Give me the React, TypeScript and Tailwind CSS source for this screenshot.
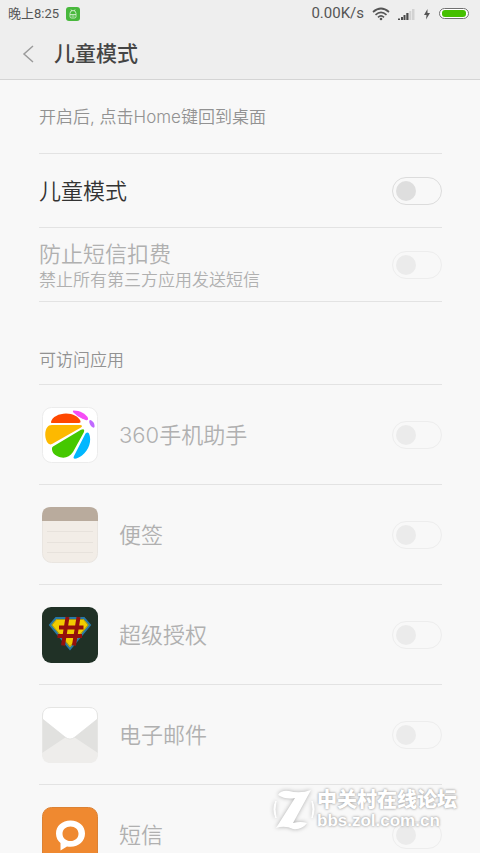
import type { ReactNode } from "react";
import { useState } from "react";

type Aplicacion = {
  id: string;
  nombre: string;
  icono: ReactNode;
};

const IconoAsistente = () => (
  <svg viewBox="0 0 56 56" className="size-14" aria-hidden="true">
    <rect x=".5" y=".5" width="55" height="55" rx="9" fill="#fff" stroke="#ececec" />
    <path d="M9 15C10 10 17 6.500 24 6.500C31 6.500 37 10 38.500 14Q39 16 37 16H10Q8.500 16 9 15Z" fill="#ff4800" />
    <path d="M31.500 3.500C38 3.500 44 7 46 11Q46.500 14 43.500 13C39 11.500 33 7.500 31 5Q30.500 3.800 31.500 3.500Z" fill="#f54df5" />
    <path d="M48 13C51 13.500 53 17 52.500 20Q51.500 21.500 49.500 19.500C47.500 17.500 46.500 13.500 48 13Z" fill="#c069ff" />
    <path d="M10 18H38Q41.500 18.500 39 20.500L10 37Q7 38.500 5 35C2 29 3 21 7 18.600Q8 18 10 18Z" fill="#fdb900" />
    <path d="M11 39.500L39 22.800Q43 21 42 25L31 45C27 51 21 52 15 49C12 47.500 10 45 10 42.500Q9.500 40.500 11 39.500Z" fill="#45c800" />
    <path d="M43.500 26.500Q45.500 24.500 47 26.500C50 34 47 43 40 48.500C37 51 33.500 52 32 51.500Q31 51 32 49Z" fill="#00b7ff" />
  </svg>
);

const IconoNotas = () => (
  <svg viewBox="0 0 56 56" className="size-14" aria-hidden="true">
    <rect x=".5" y=".5" width="55" height="55" rx="9" fill="#f2ede7" stroke="#e9e5e0" />
    <path d="M0 14V9Q0 0 9 0H47Q56 0 56 9V14Z" fill="#b9ab9d" />
    <path d="M5 24.500H51M5 35.500H51M5 45.500H51" stroke="#e7e2dc" />
  </svg>
);

const IconoPermisos = () => (
  <svg viewBox="0 0 56 56" className="size-14" aria-hidden="true">
    <rect width="56" height="56" rx="9" fill="#203126" />
    <path d="M14 11H42L48 18L28 42L8 18Z" fill="#f2cc00" stroke="#2877a5" strokeWidth="2" />
    <path d="M14.500 12.500H41.500L46 18L28 39.500L10 18Z" fill="none" stroke="#a99a13" />
    <path d="M25.500 10L21 38.500M36.500 10L32 38.500M17 20.500H41.500M15.500 29H40" fill="none" stroke="#94100c" strokeWidth="4" />
  </svg>
);

const IconoCorreo = () => (
  <svg viewBox="0 0 56 56" className="size-14" aria-hidden="true">
    <rect x=".5" y=".5" width="55" height="55" rx="9" fill="#e1e1df" stroke="#e6e6e4" />
    <path d="M0 46L24 30H32L56 46V47Q56 56 47 56H9Q0 56 0 47Z" fill="#eeedeb" />
    <path d="M.500 12V9Q.500 .500 9 .500H47Q55.500 .500 55.500 9V12L33 30Q28 34 23 30Z" fill="#fff" stroke="#dededc" strokeWidth=".7" />
  </svg>
);

const IconoMensajes = () => (
  <svg viewBox="0 0 56 56" className="size-14" aria-hidden="true">
    <rect x=".5" y=".5" width="55" height="55" rx="9" fill="#ef8930" stroke="#dc8234" />
    <path
      d="M28.500 13.500C20 13.500 14 19 14 26.500C14 31 16 34 18.500 36V43.500L25 39.500C35 41.500 43 35 43 26.500C43 19 37 13.500 28.500 13.500ZM28.500 19.500C33 19.500 36.500 22.500 36.500 26.700C36.500 31 33 34 28.500 34C24 34 20.500 31 20.500 26.700C20.500 22.500 24 19.500 28.500 19.500Z"
      fill="#fff"
      fillRule="evenodd"
    />
  </svg>
);

const aplicaciones: Aplicacion[] = [
  { id: "asistente", nombre: "360手机助手", icono: <IconoAsistente /> },
  { id: "notas", nombre: "便签", icono: <IconoNotas /> },
  { id: "permisos", nombre: "超级授权", icono: <IconoPermisos /> },
  { id: "correo", nombre: "电子邮件", icono: <IconoCorreo /> },
  { id: "mensajes", nombre: "短信", icono: <IconoMensajes /> },
];

type InterruptorProps = {
  id: string;
  disabled?: boolean;
  checked?: boolean;
  onChange?: (valor: boolean) => void;
};

const Interruptor = ({ id, disabled, checked = false, onChange }: InterruptorProps) => (
  <input
    id={id}
    type="checkbox"
    role="switch"
    disabled={disabled}
    checked={checked}
    onChange={(e) => onChange?.(e.target.checked)}
    className="flex h-7 w-[50px] shrink-0 appearance-none items-center rounded-full border border-[#dcdcdc] px-[3px] before:size-5 before:rounded-full before:bg-[#dedede] checked:justify-end checked:before:bg-[#45c800] disabled:border-[#ededed] disabled:before:bg-[#ebebeb]"
  />
);

const BarraEstado = () => (
  <div className="flex h-7 items-center justify-between pr-[11px] pb-px pl-2 text-[#555]">
    <div className="flex items-center gap-[7px] font-['Roboto','Noto_Sans_CJK_SC',sans-serif] text-[13px]">
      <span>晚上8:25</span>
      <svg viewBox="0 0 14 14" className="size-[14px]" aria-hidden="true">
        <rect width="14" height="14" rx="3" fill="#48b83c" />
        <path d="M4 6.500Q4 3.500 7 3.500T10 6.500V9.500Q10 11 8.500 11H5.500Q4 11 4 9.500ZM4 7.500H10M5 2.500L6 4M9 2.500L8 4M5.500 9H8.500" fill="none" stroke="#dff4dc" strokeWidth=".8" />
      </svg>
    </div>
    <div className="flex items-center">
      <span className="font-['Roboto','Noto_Sans_CJK_SC',sans-serif] text-[15px]">0.00K/s</span>
      <svg viewBox="0 0 18 14" className="ml-2 h-[14px] w-[18px]" fill="none" stroke="#555" strokeWidth="1.700" aria-hidden="true">
        <path d="M1 5Q9-2 17 5M3.500 7.800Q9 3 14.500 7.800M6 10.300Q9 7.500 12 10.300" />
        <circle cx="9" cy="12" r="1.300" fill="#555" stroke="none" />
      </svg>
      <svg viewBox="0 0 18 12" className="ml-[7px] h-3 w-[18px]" aria-hidden="true">
        <path d="M1 10.500H3V12H1ZM4 9H6V12H4ZM6.500 7H8.500V12H6.500ZM9.300 5H11.500V12H9.300Z" fill="#4a4a4a" />
        <path d="M12.300 3H14.300V12H12.300ZM15 1H17.500V12H15Z" fill="#d2d2d2" />
      </svg>
      <svg viewBox="0 0 8 12" className="ml-2 h-3 w-2" aria-hidden="true">
        <path d="M4.500 1L1 7H3.500L3 11.500L7 5H4.500Z" fill="#555" />
      </svg>
      <svg viewBox="0 0 30 11" className="ml-2 h-[11px] w-[30px]" aria-hidden="true">
        <rect x=".5" y=".5" width="29" height="10" rx="5" fill="#fff" stroke="#707070" />
        <rect x="3" y="2" width="24" height="7" rx="3" fill="#45c000" />
      </svg>
    </div>
  </div>
);

const MarcaForo = () => (
  <div className="pointer-events-none absolute right-[23px] bottom-[22px] flex items-center gap-[2px] text-white">
    <svg viewBox="0 0 42 42" className="size-[42px] drop-shadow-[0_0_2px_#aaaaaa]" aria-hidden="true">
      <path d="M5 6Q8 1 16 2Q27 5 38 1L20 34Q28 32 34 34Q29 41 20 40Q12 36 3 39L22 9Q13 11 5 6Z" fill="#fff" />
      <path d="M3 12Q-1 20 3 29Q1 20 3 12ZM39 12Q43 20 39 29Q41 20 39 12Z" fill="#fff" stroke="#fff" />
    </svg>
    <div className="font-['Liberation_Sans','Noto_Sans_CJK_SC',sans-serif] [text-shadow:0_0_2px_#aaa,0_0_3px_#aaa]">
      <p className="text-[20px] leading-[22px] font-black">中关村在线论坛</p>
      <p className="text-[17px] leading-[20px] font-bold">bbs.zol.com.cn</p>
    </div>
  </div>
);

const App = () => {
  const [modoInfantil, setModoInfantil] = useState(false);
  return (
    <div className="relative flex h-screen flex-col overflow-hidden bg-[#f8f8f8] font-['Inter','Noto_Sans_CJK_SC',sans-serif]">
      <header className="shrink-0 border-b border-[#d4d4d4] bg-[#eee]">
        <BarraEstado />
        <div className="flex h-[51px] items-center gap-[18px] pl-[22px]">
          <button type="button" aria-label="返回">
            <svg viewBox="0 0 14 20" className="h-5 w-[14px]" fill="none" stroke="#9b9b9b" strokeWidth="1.500" aria-hidden="true">
              <path d="M11 2L2 10L11 18" />
            </svg>
          </button>
          <h1 className="text-[21px] font-medium text-[#444]">儿童模式</h1>
        </div>
      </header>

      <main className="min-h-0 flex-1 overflow-y-auto pr-[38px] pl-[39px] [scrollbar-width:none]">
        <p className="flex h-[73px] items-center pt-[2px] text-[17px] font-[350] text-[#929292]">开启后, 点击Home键回到桌面</p>
        <div className="flex h-[74px] items-center justify-between border-t border-[#e3e3e3]">
          <label htmlFor="modo" className="pt-[2px] text-[22px] font-[350] text-[#333]">儿童模式</label>
          <Interruptor id="modo" checked={modoInfantil} onChange={setModoInfantil} />
        </div>
        <div className="flex h-[75px] items-center justify-between border-y border-[#e3e3e3]">
          <label htmlFor="sms" className="pt-[2px] font-[350] text-[#b0b0b0]">
            <span className="block text-[22px] leading-7">防止短信扣费</span>
            <span className="block text-[17px] leading-6">禁止所有第三方应用发送短信</span>
          </label>
          <Interruptor id="sms" disabled />
        </div>

        {/* Aplicaciones permitidas */}
        <h2 className="pt-[46px] pb-[11px] text-[17px] leading-[25px] font-[350] text-[#929292]">可访问应用</h2>
        <ul>
          {aplicaciones.map((app) => (
            <li key={app.id} className="flex h-[100px] items-center justify-between border-t border-[#e3e3e3] pl-[3px]">
              <label htmlFor={app.id} className="flex items-center gap-[21px] text-[22px] font-[350] text-[#b0b0b0]">
                {app.icono}
                <span className="pt-[2px]">{app.nombre}</span>
              </label>
              <Interruptor id={app.id} disabled />
            </li>
          ))}
        </ul>
      </main>
      <MarcaForo />
    </div>
  );
};

export default App;
